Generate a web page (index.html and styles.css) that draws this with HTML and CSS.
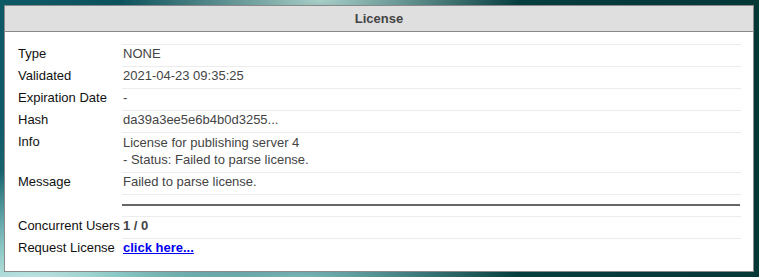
FILE: index.html
```html
<!DOCTYPE html>
<html lang="en">
<head>
  <meta charset="UTF-8">
  <meta name="viewport" content="width=device-width, initial-scale=1.0">
  <link rel="stylesheet" href="styles.css">
  <title>License</title>
</head>
<body>
<div class="panel">
  <div class="panel-title">License</div>
  <div class="panel-body">
    <table class="license-table">
      <tr>
        <td class="label">Type</td>
        <td class="value">NONE</td>
      </tr>
      <tr>
        <td class="label">Validated</td>
        <td class="value">2021-04-23 09:35:25</td>
      </tr>
      <tr>
        <td class="label">Expiration Date</td>
        <td class="value">-</td>
      </tr>
      <tr>
        <td class="label">Hash</td>
        <td class="value">da39a3ee5e6b4b0d3255...</td>
      </tr>
      <tr>
        <td class="label">Info</td>
        <td class="value multi">License for publishing server 4<br>- Status: Failed to parse license.</td>
      </tr>
      <tr>
        <td class="label">Message</td>
        <td class="value">Failed to parse license.</td>
      </tr>
      <tr>
        <td class="label"></td>
        <td class="value"><div class="divider"></div></td>
      </tr>
      <tr>
        <td class="label">Concurrent Users</td>
        <td class="value strong">1 / 0</td>
      </tr>
      <tr>
        <td class="label">Request License</td>
        <td class="value"><a href="#" class="request-link">click here...</a></td>
      </tr>
    </table>
  </div>
</div>
</body>
</html>
```

FILE: styles.css
```css
html, body {
  height: 100%;
}

body {
  margin: 0;
  padding: 5px 5px 5px 4px;
  box-sizing: border-box;
  font-family: "Liberation Sans", Arial, sans-serif;
  font-size: 13px;
  background:
    radial-gradient(ellipse 260px 120px at 30px 290px, #cfecea 0%, #8cc9c6 35%, rgba(80, 160, 160, 0) 100%),
    radial-gradient(ellipse 200px 60px at 320px 0px, #a9cfc8 0%, rgba(100, 160, 155, 0) 100%),
    radial-gradient(ellipse 220px 50px at 300px 280px, #7fbcbc 0%, rgba(70, 140, 140, 0) 100%),
    linear-gradient(180deg, rgba(0, 0, 0, 0) 40%, rgba(60, 140, 145, 0.5) 100%) left / 40px 100% no-repeat,
    linear-gradient(90deg, #0e5966 0%, #0a4a52 35%, #063e3f 65%, #053737 100%);
}

.panel {
  height: 100%;
  box-sizing: border-box;
  border: 1px solid #8a8a8a;
  background: #fff;
  display: flex;
  flex-direction: column;
}

.panel-title {
  height: 25px;
  line-height: 25px;
  text-align: center;
  font-weight: bold;
  color: #444;
  background: #dfdfdf;
  border-bottom: 1px solid #8a8a8a;
}

.panel-body {
  padding: 12px 12px 0 13px;
}

.license-table {
  width: 100%;
  border-collapse: collapse;
}

.license-table td {
  vertical-align: top;
  padding: 1px 0 4px 0;
  line-height: 16px;
}

.license-table .label {
  width: 104px;
  white-space: nowrap;
  color: #111;
}

.license-table .value {
  border-top: 1px solid #ececec;
  padding-left: 1px;
  color: #444;
}

.license-table .multi {
  line-height: 17px;
}

.license-table .strong {
  font-weight: bold;
}

.divider {
  height: 2px;
  margin: 8px 1px 6px -1px;
  background: #666;
}

.request-link {
  color: #0000ee;
  font-weight: bold;
}
```
